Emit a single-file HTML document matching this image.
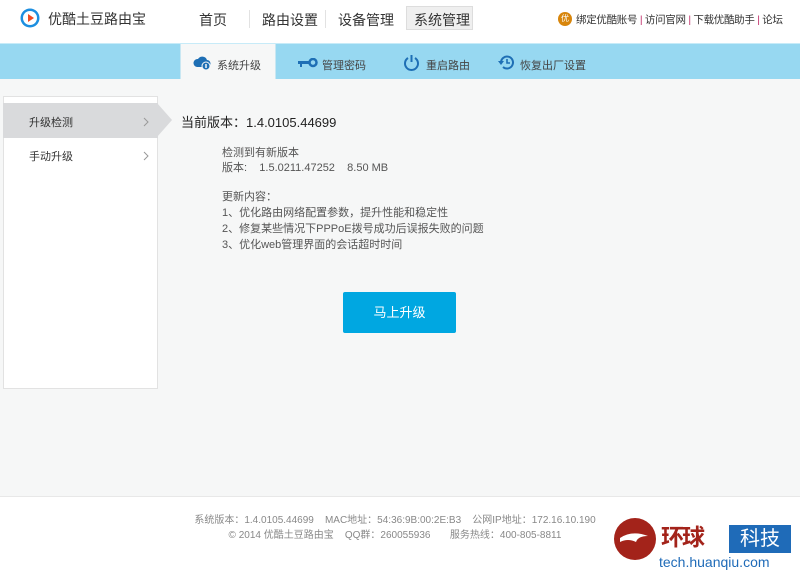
<!DOCTYPE html>
<html><head><meta charset="utf-8"><style>
*{margin:0;padding:0;box-sizing:border-box}
body{width:800px;height:574px;overflow:hidden;background:#fff;font-family:"Liberation Sans","Noto Sans CJK SC",sans-serif;color:#333;position:relative}
.a{position:absolute;white-space:nowrap}
</style></head><body>
<svg class="a" style="left:20px;top:8px" width="20" height="20"><circle cx="10" cy="10" r="9.5" fill="#1d8fe0"/><circle cx="10" cy="10" r="7" fill="#fff"/><path d="M8 6 L14 10 L8 14Z" fill="#f04b23"/></svg>
<div class="a" style="left:48px;top:9px;font-size:14px;color:#333">优酷土豆路由宝</div>
<div class="a" style="left:199px;top:10px;font-size:14px">首页</div>
<div class="a" style="left:249px;top:10px;width:1px;height:18px;background:#e2e2e2"></div>
<div class="a" style="left:262px;top:10px;font-size:14px">路由设置</div>
<div class="a" style="left:325px;top:10px;width:1px;height:18px;background:#e2e2e2"></div>
<div class="a" style="left:338px;top:10px;font-size:14px">设备管理</div>
<div class="a" style="left:406px;top:6px;width:67px;height:24px;background:#efefef;border:1px solid #ddd"></div>
<div class="a" style="left:414px;top:10px;font-size:14px">系统管理</div>
<div class="a" style="left:558px;top:12px;width:14px;height:14px;border-radius:50%;background:#d8860c;color:#fff;font-size:8px;text-align:center;line-height:14px">优</div>
<div class="a" style="left:576px;top:12px;font-size:10.5px;color:#333;letter-spacing:-0.3px">绑定优酷账号 <span style="color:#c0306a">|</span> 访问官网 <span style="color:#c0306a">|</span> 下载优酷助手 <span style="color:#c0306a">|</span> 论坛</div>
<div class="a" style="left:0;top:43px;width:800px;height:36px;background:#97d8f1;border-top:1px solid #c7ebf8"></div>
<div class="a" style="left:180px;top:44px;width:96px;height:35px;background:#f6f7f7;border-left:1px solid #c9e7f2;border-right:1px solid #c9e7f2"></div>
<svg class="a" style="left:193px;top:55px" width="18" height="16"><path d="M4 12 a4 4 0 0 1 1-8 a5 5 0 0 1 9 1 a3.5 3.5 0 0 1 0 7Z" fill="#1e6fb5"/><circle cx="13" cy="11" r="4" fill="#1e6fb5" stroke="#f6f7f7" stroke-width="1"/><rect x="12.3" y="9" width="1.4" height="4" fill="#fff"/></svg>
<div class="a" style="left:217px;top:57px;font-size:11px;color:#444">系统升级</div>
<svg class="a" style="left:298px;top:58px" width="20" height="10"><rect x="0" y="3" width="12" height="3" fill="#1e6fb5"/><rect x="2" y="5" width="2" height="4" fill="#1e6fb5"/><circle cx="15" cy="4.5" r="3.5" fill="none" stroke="#1e6fb5" stroke-width="2.5"/></svg>
<div class="a" style="left:322px;top:57px;font-size:11px;color:#444">管理密码</div>
<svg class="a" style="left:403px;top:54px" width="17" height="17"><path d="M5 4 A6.5 6.5 0 1 0 12 4" fill="none" stroke="#1e6fb5" stroke-width="2"/><rect x="7.5" y="1" width="2" height="7" fill="#1e6fb5"/></svg>
<div class="a" style="left:426px;top:57px;font-size:11px;color:#444">重启路由</div>
<svg class="a" style="left:498px;top:54px" width="17" height="17"><path d="M3 8.5 A6 6 0 1 1 5 13" fill="none" stroke="#1e6fb5" stroke-width="2"/><path d="M0 7 L6 7 L3 11Z" fill="#1e6fb5"/><path d="M9 5 V9 H12" fill="none" stroke="#1e6fb5" stroke-width="1.6"/></svg>
<div class="a" style="left:520px;top:57px;font-size:11px;color:#444">恢复出厂设置</div>
<div class="a" style="left:0;top:79px;width:800px;height:418px;background:#f6f7f7;border-bottom:1px solid #e8e8e8"></div>
<div class="a" style="left:3px;top:96px;width:155px;height:293px;background:#fff;border:1px solid #e2e2e2"></div>
<div class="a" style="left:3px;top:103px;width:155px;height:35px;background:#d9dadc"></div>
<div class="a" style="left:157px;top:103px;width:0;height:0;border-top:17.5px solid transparent;border-bottom:17.5px solid transparent;border-left:15px solid #d9dadc"></div>
<div class="a" style="left:29px;top:114px;font-size:11px;color:#333">升级检测</div>
<svg class="a" style="left:143px;top:117px" width="6" height="10"><path d="M1 1 L5 5 L1 9" fill="none" stroke="#999" stroke-width="1"/></svg>
<div class="a" style="left:29px;top:148px;font-size:11px;color:#333">手动升级</div>
<svg class="a" style="left:143px;top:151px" width="6" height="10"><path d="M1 1 L5 5 L1 9" fill="none" stroke="#999" stroke-width="1"/></svg>
<div class="a" style="left:181px;top:112px;font-size:13px;color:#222">当前版本：1.4.0105.44699</div>
<div class="a" style="left:222px;top:146px;font-size:11px;color:#555;line-height:15px">检测到有新版本<br>版本: &nbsp;&nbsp;&nbsp;1.5.0211.47252 &nbsp;&nbsp;&nbsp;8.50 MB</div>
<div class="a" style="left:222px;top:189px;font-size:11px;color:#555;line-height:16px">更新内容：<br>1、优化路由网络配置参数，提升性能和稳定性<br>2、修复某些情况下PPPoE拨号成功后误报失败的问题<br>3、优化web管理界面的会话超时时间</div>
<div class="a" style="left:343px;top:292px;width:113px;height:41px;background:#00a7e1;border-radius:2px;color:#fff;font-size:13px;text-align:center;line-height:41px">马上升级</div>
<div class="a" style="left:0;top:513px;width:790px;text-align:center;font-size:10px;color:#888;line-height:15px">系统版本：1.4.0105.44699 &nbsp;&nbsp;&nbsp;MAC地址：54:36:9B:00:2E:B3 &nbsp;&nbsp;&nbsp;公网IP地址：172.16.10.190<br>© 2014 优酷土豆路由宝 &nbsp;&nbsp;&nbsp;QQ群：260055936 &nbsp;&nbsp;&nbsp;&nbsp;&nbsp;&nbsp;服务热线：400-805-8811</div>
<div class="a" style="left:614px;top:518px;width:42px;height:42px;border-radius:50%;background:#a3231a"></div>
<svg class="a" style="left:618px;top:528px" width="36" height="22"><path d="M2 10 Q14 2 30 8 Q20 8 18 14 Q10 10 2 14Z" fill="#fff"/></svg>
<div class="a" style="left:661px;top:523px;font-size:23px;font-weight:bold;color:#a3231a;line-height:28px;letter-spacing:-2px">环球</div>
<div class="a" style="left:729px;top:525px;width:62px;height:28px;background:#1f6bb8;color:#fff;font-size:20px;line-height:28px;text-align:center">科技</div>
<div class="a" style="left:659px;top:554px;font-size:14px;color:#1f6bb8;line-height:16px">tech.huanqiu.com</div>
</body></html>
